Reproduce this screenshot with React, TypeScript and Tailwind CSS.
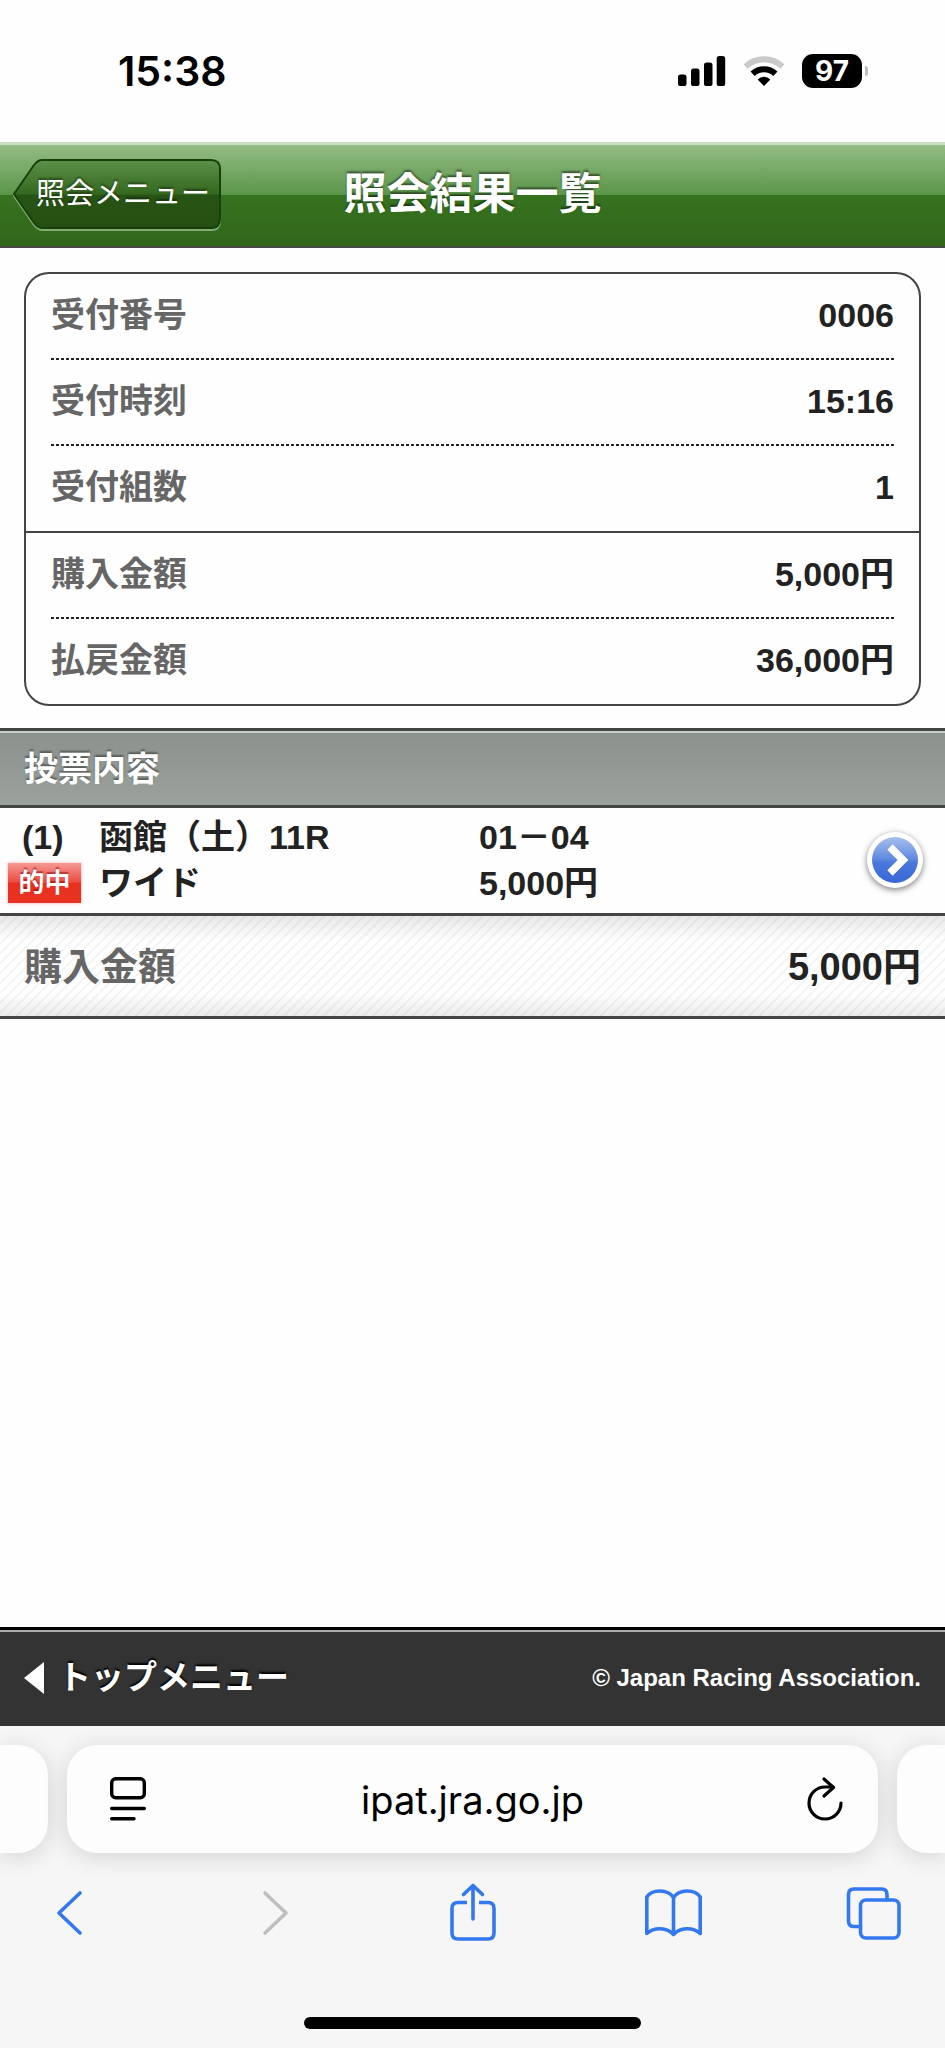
import type { ReactNode } from "react";

const jp = "font-['Liberation_Sans','Noto_Sans_CJK_JP',sans-serif]";

function StatusBar() {
  return (
    <div className="flex h-[142px] items-center justify-between pr-[77px] pl-[118px] font-['Inter',sans-serif]">
      <time className="text-[41px] leading-none font-semibold text-black">15:38</time>
      <div className="flex items-center gap-[17px]">
        <svg viewBox="0 0 48 30" className="h-[30px] w-12" aria-label="電波強度" role="img">
          <rect x="0" y="18.5" width="8.5" height="11.5" rx="2.6" />
          <rect x="13" y="12.5" width="8.5" height="17.5" rx="2.6" />
          <rect x="26" y="6.5" width="8.5" height="23.5" rx="2.6" />
          <rect x="38.7" y="0" width="8.5" height="30" rx="2.6" />
        </svg>
        <svg viewBox="0 0 42 30" className="h-[30px] w-[42px]" aria-label="Wi-Fi" role="img">
          <path d="M2.6 10.6a26.5 26.5 0 0 1 36.8 0" fill="none" stroke="#c9c9c9" strokeWidth="6" />
          <path d="M9.6 17.7a16.6 16.6 0 0 1 22.8 0" fill="none" stroke="#000" strokeWidth="6" />
          <path d="M21 30l-6.4-6.5a9 9 0 0 1 12.8 0z" />
        </svg>
        <div className="flex items-center gap-[3px]">
          <span className="flex h-[34px] w-[60px] items-center justify-center rounded-[11px] bg-black text-[28px] leading-none font-bold text-white">
            97
          </span>
          <span className="h-[10px] w-[3px] rounded-r-full bg-[#bdbdbd]" />
        </div>
      </div>
    </div>
  );
}

function PageHeader() {
  return (
    <header className="grid h-[106px] grid-cols-[1fr_auto_1fr] items-center border-t-[3px] border-b-2 border-t-[#c9dfc0] border-b-[#454745] bg-[linear-gradient(#94bb84_0%,#5b964a_49%,#36731f_50%,#31661b_100%)] pb-[2px]">
      <a href="#menu" className="relative ml-3 flex h-[72px] w-[210px] items-center pl-6">
        <svg viewBox="0 0 210 72" className="absolute inset-0 h-full w-full" aria-hidden="true">
          <defs>
            <linearGradient id="btn" x1="0" y1="0" x2="0" y2="1">
              <stop offset="0" stopColor="#5d9048" />
              <stop offset=".5" stopColor="#35681f" />
              <stop offset=".52" stopColor="#275414" />
              <stop offset="1" stopColor="#254f12" />
            </linearGradient>
          </defs>
          <path d="M2 37L22 8q4-5 8-5H199q9 0 9 9v50q0 9-9 9H30q-4 0-8-5z" fill="none" stroke="#84ad73" strokeWidth="2" />
          <path d="M2 35L22 6q4-5 8-5H199q9 0 9 9v50q0 9-9 9H30q-4 0-8-5z" fill="url(#btn)" stroke="#17400a" strokeWidth="2" />
        </svg>
        <span className="relative text-[29px] leading-none whitespace-nowrap text-white [text-shadow:0_-2px_2px_rgba(0,0,0,0.4)]">
          照会メニュー
        </span>
      </a>
      <h1 className="text-[43px] leading-none font-bold text-white [text-shadow:0_-2px_2px_rgba(0,0,0,0.5)]">照会結果一覧</h1>
    </header>
  );
}

function Row({ label, value, dotted }: { label: string; value: string; dotted?: boolean }) {
  return (
    <div className="px-[25px]">
      <div
        className={
          dotted
            ? "flex h-[86px] items-center justify-between bg-[repeating-linear-gradient(90deg,#222_0_3px,transparent_3px_5px)] bg-[length:100%_2px] bg-bottom bg-no-repeat pb-1"
            : "flex h-[85px] items-center justify-between pb-1"
        }
      >
        <dt className="text-[#666]">{label}</dt>
        <dd className="text-[#222]">{value}</dd>
      </div>
    </div>
  );
}

function Summary() {
  return (
    <dl className="mx-6 mt-6 mb-[22px] rounded-[25px] border-2 border-[#444] text-[34px] leading-none font-bold">
      <Row label="受付番号" value="0006" dotted />
      <Row label="受付時刻" value="15:16" dotted />
      <Row label="受付組数" value="1" />
      <div className="border-t-2 border-[#444]">
        <Row label="購入金額" value="5,000円" dotted />
        <Row label="払戻金額" value="36,000円" />
      </div>
    </dl>
  );
}

function Bets() {
  return (
    <section>
      <div className="border-y-[3px] border-[#444]">
        <h2 className="flex h-[74px] items-center border-t-2 border-[#c9d0ca] bg-[linear-gradient(#8b918c,#9ba29d)] px-6 text-[34px] leading-none font-bold text-white [text-shadow:0_-2px_2px_rgba(0,0,0,0.4)]">
          投票内容
        </h2>
      </div>
      <a href="#bet-1" className="flex items-center border-b-[3px] border-[#444] pt-[6px] pb-[7px] pr-[22px] pl-2 text-[34px] leading-[46px] font-bold text-[#222]">
        <div className="w-[91px]">
          <div className="pl-[14px]">(1)</div>
          <div className="flex h-[46px] items-center">
            <span className="flex h-10 w-[73px] items-center justify-center bg-[linear-gradient(#f59a95_0%,#ee4a40_48%,#e8301f_50%,#ea3323_100%)] text-[26px] leading-none text-white shadow-[0_0_3px_rgba(230,50,40,0.4)] [text-shadow:0_-2px_1px_rgba(120,0,0,0.5)]">
              的中
            </span>
          </div>
        </div>
        <div className="w-[380px]">
          <div>函館（土）11R</div>
          <div>ワイド</div>
        </div>
        <div className="flex-1">
          <div>01－04</div>
          <div>5,000円</div>
        </div>
        <svg viewBox="0 0 56 56" className="h-14 w-14 overflow-visible drop-shadow-[0_2px_3px_rgba(0,0,0,0.5)]" aria-label="詳細" role="img">
          <defs>
            <linearGradient id="go" x1="0" y1="0" x2="0" y2="1">
              <stop offset="0" stopColor="#a9c0ee" />
              <stop offset=".48" stopColor="#5f88e0" />
              <stop offset=".55" stopColor="#4a78dc" />
              <stop offset="1" stopColor="#3767d6" />
            </linearGradient>
          </defs>
          <circle cx="28" cy="28" r="28" fill="#fff" />
          <circle cx="28" cy="28" r="23" fill="url(#go)" />
          <path d="M23 15L36 28L23 41" fill="none" stroke="#fff" strokeWidth="7.5" />
        </svg>
      </a>
      <dl className="flex h-[103px] items-center justify-between border-b-[3px] border-[#444] bg-[linear-gradient(rgba(0,0,0,0.09),transparent_25%,transparent_78%,rgba(0,0,0,0.08)),repeating-linear-gradient(135deg,#fff_0_4px,#f4f4f4_5px_6px,#fff_7px)] px-6 pt-[2px] text-[38px] leading-none font-bold">
        <dt className="text-[#666]">購入金額</dt>
        <dd className="text-[#222]">5,000円</dd>
      </dl>
    </section>
  );
}

function PageFooter() {
  return (
    <footer className="border-t-[3px] border-black">
      <div className="flex h-24 items-center justify-between border-t-2 border-[#aaa] bg-[#333] px-6 pb-[3px] font-bold text-white">
        <a href="#top" className="flex items-center gap-[14px] text-[33px] leading-none [text-shadow:0_-2px_2px_#000]">
          <svg viewBox="0 0 20 32" className="h-8 w-5" aria-hidden="true">
            <path d="M0 16L20 0V32z" fill="#fff" />
          </svg>
          トップメニュー
        </a>
        <small className="text-[24px] leading-none">© Japan Racing Association.</small>
      </div>
    </footer>
  );
}

function Tool({ label, color, children, disabled }: { label: string; color: string; children: ReactNode; disabled?: boolean }) {
  return (
    <button type="button" aria-label={label} disabled={disabled}>
      <svg viewBox="0 0 60 62" width="60" height="62" fill="none" stroke={color} strokeWidth="3.6" strokeLinecap="round" strokeLinejoin="round">
        {children}
      </svg>
    </button>
  );
}

function BrowserBar() {
  const blue = "#3478f0";
  const card = "h-[108px] bg-[#fdfdfd] shadow-[0_4px_24px_rgba(0,0,0,0.14)]";
  return (
    <nav className="overflow-hidden bg-[#f6f6f6] pt-[19px] pb-[19px] font-['Inter',sans-serif]">
      <div className="flex gap-[19px]">
        <div className={`${card} w-12 rounded-r-[30px]`} />
        <div className={`${card} grid flex-1 grid-cols-[1fr_auto_1fr] items-center rounded-[30px] px-[35px]`}>
          <button type="button" aria-label="ページメニュー" className="justify-self-start pl-2">
            <svg viewBox="0 0 36 44" width="36" height="44" fill="none" stroke="#000" strokeWidth="3.4" strokeLinecap="round">
              <rect x="1.7" y="1.7" width="32.6" height="19" rx="4" />
              <path d="M1.7 31.5H34.3M1.7 41.8H24" />
            </svg>
          </button>
          <span className="pt-[2px] text-[38px] leading-none text-black">ipat.jra.go.jp</span>
          <button type="button" aria-label="再読み込み" className="justify-self-end">
            <svg viewBox="0 0 36 44" width="36" height="44" fill="none" stroke="#000" strokeWidth="3.2" strokeLinecap="round" strokeLinejoin="round">
              <path d="M34 26A16 16 0 1 1 18 10H26" />
              <path d="M17 2L26.5 10.5L17 19" />
            </svg>
          </button>
        </div>
        <div className={`${card} w-12 rounded-l-[30px]`} />
      </div>
      <div className="mt-[29px] flex justify-between pr-[42px] pl-10">
        <Tool label="戻る" color={blue}>
          <path d="M40 11L19 31L40 51" />
        </Tool>
        <Tool label="進む" color="#bfbfbf" disabled>
          <path d="M24 11L45 31L24 51" />
        </Tool>
        <Tool label="共有" color={blue}>
          <path d="M25 20.5H16q-6 0-6 6V51q0 6 6 6H46q6 0 6-6V26.5q0-6-6-6H37" strokeLinecap="butt" />
          <path d="M31 37V3.5M21.5 12.5L31 3.5L40.5 12.5" />
        </Tool>
        <Tool label="ブックマーク" color={blue}>
          <path d="M31.5 15.5C26 7 10 7 4.8 15V51.5C12 45 25 45 31.5 52.500C38 45 51 45 58.2 51.5V15C53 7 37 7 31.500 15.500V52" />
        </Tool>
        <Tool label="タブ" color={blue}>
          <rect x="17.5" y="18" width="38.5" height="38" rx="5.5" />
          <path d="M17.5 44.5H11q-5.5 0-5.5-5.5V12.5Q5.5 7 11 7H38.5q5.5 0 5.5 5.5V18" />
        </Tool>
      </div>
      <div className="mx-auto mt-[73px] h-3 w-[337px] rounded-full bg-black" />
    </nav>
  );
}

export default function App() {
  return (
    <div className={`flex min-h-screen flex-col bg-[#fefefe] ${jp}`} lang="ja">
      <StatusBar />
      <PageHeader />
      <main className="flex-1">
        <Summary />
        <Bets />
      </main>
      <PageFooter />
      <BrowserBar />
    </div>
  );
}
